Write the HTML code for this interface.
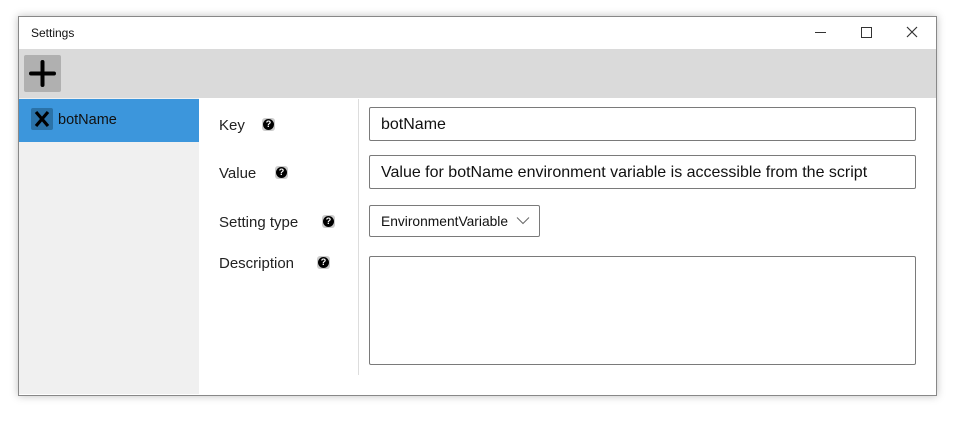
<!DOCTYPE html>
<html><head><style>
body{margin:0;width:962px;height:423px;background:#fff;font-family:"Liberation Sans",sans-serif;position:relative;overflow:hidden}
.a{position:absolute}
.win{left:18px;top:16px;width:917px;height:378px;border:1px solid #888;box-shadow:0 0 8px rgba(0,0,0,.25);background:#fff}
.lbl{font-size:15px;color:#222}
.q{width:13px;height:13px;border-radius:3px;background:#ccc;}
.q:after{content:"";position:absolute;left:1px;top:1px;width:11px;height:11px;border-radius:50%;background:#000}
.q span{position:absolute;left:0;top:0;width:13px;text-align:center;color:#fff;font-size:9px;font-weight:bold;line-height:13px;z-index:1}
.in{border:1px solid #7a7a7a;border-radius:2px;background:#fff;box-sizing:border-box;font-size:15px;color:#111;padding-left:11px}
</style></head><body>
<div class="a win"></div>
<div class="a" style="left:31px;top:26px;font-size:12px;color:#111">Settings</div>
<div class="a" style="left:815px;top:32px;width:11px;height:1px;background:#333"></div>
<div class="a" style="left:861px;top:27px;width:9px;height:9px;border:1px solid #333"></div>
<svg class="a" style="left:906px;top:26px" width="12" height="12"><path d="M1 1L11 11M11 1L1 11" stroke="#333" stroke-width="1.2"/></svg>
<div class="a" style="left:19px;top:49px;width:917px;height:49px;background:#dadada"></div>
<div class="a" style="left:24px;top:55px;width:37px;height:37px;background:#b0b0b0;border-radius:2px"></div>
<svg class="a" style="left:24px;top:55px" width="37" height="37"><path d="M18.5 7V30M7 18.5H30" stroke="#000" stroke-width="4" stroke-linecap="round"/></svg>
<div class="a" style="left:19px;top:98px;width:180px;height:296px;background:#f0f0f0"></div>
<div class="a" style="left:19px;top:99px;width:180px;height:43px;background:#3c96dc"></div>
<div class="a" style="left:31px;top:108px;width:22px;height:22px;background:#2a72a8;border-radius:2px"></div>
<svg class="a" style="left:31px;top:108px" width="22" height="22"><path d="M5 4L17 18M17 4L5 18" stroke="#000" stroke-width="3.2"/></svg>
<div class="a" style="left:58px;top:112px;font-size:14.5px;color:#111">botName</div>
<div class="a" style="left:358px;top:99px;width:1px;height:276px;background:#ddd"></div>
<div class="a lbl" style="left:219px;top:117px">Key</div>
<div class="a q" style="left:262px;top:118px"><span>?</span></div>
<div class="a lbl" style="left:219px;top:165px">Value</div>
<div class="a q" style="left:275px;top:166px"><span>?</span></div>
<div class="a lbl" style="left:219px;top:214px">Setting type</div>
<div class="a q" style="left:322px;top:215px"><span>?</span></div>
<div class="a lbl" style="left:219px;top:255px">Description</div>
<div class="a q" style="left:317px;top:256px"><span>?</span></div>
<div class="a in" style="left:369px;top:107px;width:547px;height:34px;line-height:34px;font-size:16px">botName</div>
<div class="a in" style="left:369px;top:155px;width:547px;height:34px;line-height:34px;font-size:16px">Value for botName environment variable is accessible from the script</div>
<div class="a in" style="left:369px;top:205px;width:171px;height:32px;line-height:31px;font-size:13.8px">EnvironmentVariable</div>
<svg class="a" style="left:516px;top:216px" width="14" height="9"><path d="M1 1.5L7 7.5L13 1.5" stroke="#666" fill="none"/></svg>
<div class="a in" style="left:369px;top:256px;width:547px;height:109px"></div>
</body></html>
